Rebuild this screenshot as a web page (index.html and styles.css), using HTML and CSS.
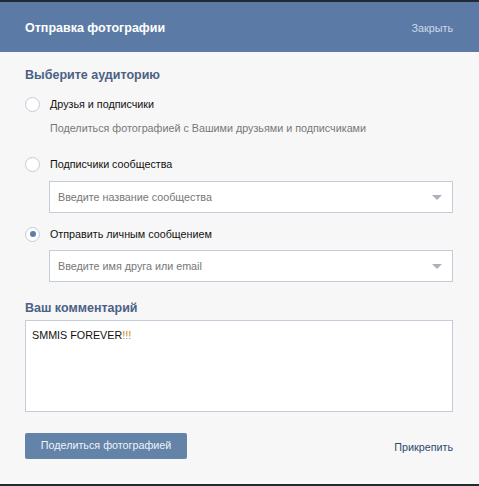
FILE: index.html
```html
<!DOCTYPE html>
<html lang="ru">
<head>
<meta charset="utf-8">
<title>Отправка фотографии</title>
<link rel="stylesheet" href="styles.css">
</head>
<body>
<div class="modal">
  <header class="head">
    <div class="head-title">Отправка фотографии</div>
    <div class="head-close">Закрыть</div>
  </header>
  <main class="content">
    <h2 class="section-title first">Выберите аудиторию</h2>
    <div class="radio-row">
      <span class="radio"></span>
      <span class="radio-label">Друзья и подписчики</span>
    </div>
    <div class="desc">Поделиться фотографией с Вашими друзьями и подписчиками</div>
    <div class="radio-row gap-big">
      <span class="radio"></span>
      <span class="radio-label">Подписчики сообщества</span>
    </div>
    <div class="select">
      <span class="placeholder">Введите название сообщества</span>
      <span class="arrow"></span>
    </div>
    <div class="radio-row gap-mid">
      <span class="radio checked"></span>
      <span class="radio-label">Отправить личным сообщением</span>
    </div>
    <div class="select select-2">
      <span class="placeholder">Введите имя друга или email</span>
      <span class="arrow"></span>
    </div>
    <h2 class="section-title second">Ваш комментарий</h2>
    <div class="comment">SMMIS FOREVER<span class="excl">!!!</span></div>
    <div class="actions">
      <button class="share-btn">Поделиться фотографией</button>
      <span class="attach">Прикрепить</span>
    </div>
  </main>
</div>
</body>
</html>
```
FILE: styles.css
```css
* { box-sizing: border-box; }
html, body { margin: 0; padding: 0; }
body {
  background: #1f2a33;
  font-family: "Liberation Sans", Arial, sans-serif;
  font-size: 10.75px;
  color: #000;
}
.modal {
  margin-top: 2px;
  height: 482px;
  background: #f7f7f7;
  display: flex;
  flex-direction: column;
}
.head {
  height: 50px;
  background: #5b7ba6;
  display: flex;
  align-items: center;
  justify-content: space-between;
  padding: 0 26px 0 25px;
}
.head-title {
  color: #fff;
  font-weight: bold;
  font-size: 12.5px;
  margin-top: 2px;
}
.head-close {
  color: #cfdae8;
  font-size: 10.75px;
  margin-top: 2px;
}
.content {
  padding: 0 26px 0 25px;
  display: flex;
  flex-direction: column;
}
.section-title {
  margin: 0;
  font-size: 12.5px;
  font-weight: bold;
  color: #4b6185;
  line-height: 20px;
}
.section-title.first { margin-top: 13px; }
.section-title.second { margin-top: 16px; }
.radio-row {
  display: flex;
  align-items: center;
  height: 20px;
  margin-top: 9px;
}
.radio-row.gap-big { margin-top: 16px; }
.radio-row.gap-mid { margin-top: 11px; }
.radio {
  width: 15px;
  height: 15px;
  border: 1px solid #c3ccd8;
  border-radius: 50%;
  background: #fff;
  flex: none;
  display: flex;
  align-items: center;
  justify-content: center;
}
.radio.checked::after {
  content: "";
  width: 6px;
  height: 6px;
  border-radius: 50%;
  background: #5e7ea8;
}
.radio-label {
  margin-left: 10px;
  color: #111;
}
.desc {
  margin: 4px 0 0 25px;
  line-height: 20px;
  color: #777;
}
.select {
  margin: 7px 0 0 24px;
  height: 32px;
  background: #fff;
  border: 1px solid #c3ccd8;
  display: flex;
  align-items: center;
  justify-content: space-between;
  padding: 0 10px 0 8px;
}
.select-2 { margin-top: 6px; }
.placeholder { color: #777; }
.arrow {
  width: 0;
  height: 0;
  border-left: 5px solid transparent;
  border-right: 5px solid transparent;
  border-top: 5px solid #acb2bd;
}
.comment {
  margin-top: 2px;
  height: 92px;
  background: #fff;
  border: 1px solid #c3ccd8;
  padding: 5px 6px;
  line-height: 18px;
  color: #111;
}
.excl { color: #c08a1a; }
.actions {
  margin-top: 21px;
  display: flex;
  align-items: center;
  justify-content: space-between;
}
.share-btn {
  width: 162px;
  height: 26px;
  border: none;
  border-radius: 2px;
  background: #6383a8;
  color: #eef3f8;
  font-family: "Liberation Sans", Arial, sans-serif;
  font-size: 10.75px;
  padding: 0 0 2px;
}
.attach {
  color: #2b4a6e;
  margin-top: 1px;
}
```
